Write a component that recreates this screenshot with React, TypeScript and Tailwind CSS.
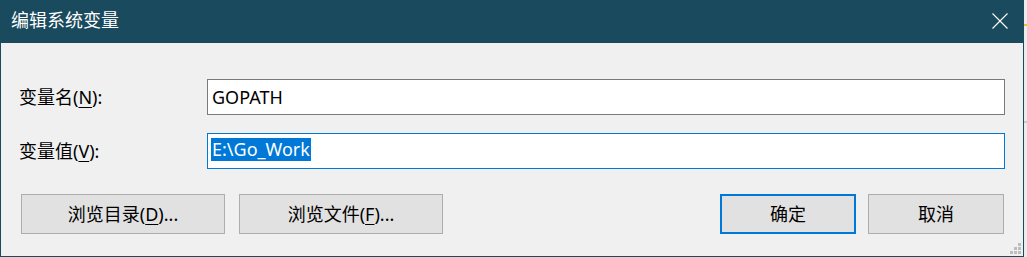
const font = { fontFamily: '"Noto Sans", "Noto Sans CJK SC", sans-serif' };

const Key = ({ children }: { children: React.ReactNode }) => (
  <span className="underline decoration-1 underline-offset-[3px]">{children}</span>
);

function Btn({
  children,
  width,
  primary,
}: {
  children: React.ReactNode;
  width: string;
  primary?: boolean;
}) {
  return (
    <button
      className={
        primary
          ? "flex h-[40px] w-[136px] items-center justify-center border-2 border-[#0078d7] bg-[#e1e1e1] text-[18px] text-black"
          : `flex h-[40px] ${width} items-center justify-center border border-[#adadad] bg-[#e1e1e1] text-[18px] text-black`
      }
    >
      {children}
    </button>
  );
}

export default function App() {
  return (
    <div className="flex h-[257px] w-[1027px] overflow-hidden" style={font}>
      <div className="relative flex w-[1024px] flex-col border-x border-b border-[#194a5e] bg-[#f0f0f0]">
        {/* title bar */}
        <div className="flex h-[43px] shrink-0 items-center justify-between bg-[#194a5e] pl-[10px] pr-[15px]">
          <span className="-mt-[3px] text-[18px] leading-none text-white">编辑系统变量</span>
          <svg width="16" height="16" viewBox="0 0 16 16" className="-mt-[2px]">
            <path d="M0.5 0.5 L15.5 15.5 M15.5 0.5 L0.5 15.5" stroke="#ffffff" strokeWidth="1.1" />
          </svg>
        </div>

        {/* fields */}
        <div className="flex flex-col gap-[18px] pl-[20px] pr-[18px] pt-[36px]">
          <div className="flex items-center">
            <label className="w-[186px] -translate-x-[2px] text-[18px] text-black">
              变量名(<Key>N</Key>):
            </label>
            <div className="flex h-[36px] flex-1 items-center border border-[#7a7a7a] bg-white pl-[4px] text-[18px] text-black">
              GOPATH
            </div>
          </div>
          <div className="flex items-center">
            <label className="w-[186px] -translate-x-[2px] text-[18px] text-black">
              变量值(<Key>V</Key>):
            </label>
            <div className="flex h-[36px] flex-1 items-center border border-[#0078d7] bg-white pl-[3px] text-[18px]">
              <span className="-mt-[3px] bg-[#0078d7] px-[1px] leading-[23px] text-white">E:\Go_Work</span>
            </div>
          </div>
        </div>

        {/* buttons */}
        <div className="mt-[25px] flex items-center pl-[20px] pr-[19px]">
          <div className="flex gap-[14px]">
            <Btn width="w-[204px]">
              浏览目录(<Key>D</Key>)...
            </Btn>
            <Btn width="w-[204px]">
              浏览文件(<Key>F</Key>)...
            </Btn>
          </div>
          <div className="ml-auto flex gap-[12px]">
            <Btn width="w-[136px]" primary>
              确定
            </Btn>
            <Btn width="w-[136px]">取消</Btn>
          </div>
        </div>

        {/* size grip */}
        <svg width="11" height="11" viewBox="0 0 11 11" className="absolute bottom-[2px] right-[2px]">
          <rect x="8" y="0" width="3" height="3" fill="#bdbdbd" />
          <rect x="4" y="4" width="3" height="3" fill="#bdbdbd" />
          <rect x="8" y="4" width="3" height="3" fill="#bdbdbd" />
          <rect x="0" y="8" width="3" height="3" fill="#bdbdbd" />
          <rect x="4" y="8" width="3" height="3" fill="#bdbdbd" />
          <rect x="8" y="8" width="3" height="3" fill="#bdbdbd" />
        </svg>
      </div>

      {/* sliver of what lies behind */}
      <div className="flex w-[3px] flex-col bg-[#ebebeb]">
        <div className="mt-[24px] h-[2px] w-[3px] bg-[#f2c12e]" />
        <div className="mt-[95px] h-[2px] w-[3px] bg-[#c8c8c8]" />
      </div>
    </div>
  );
}
